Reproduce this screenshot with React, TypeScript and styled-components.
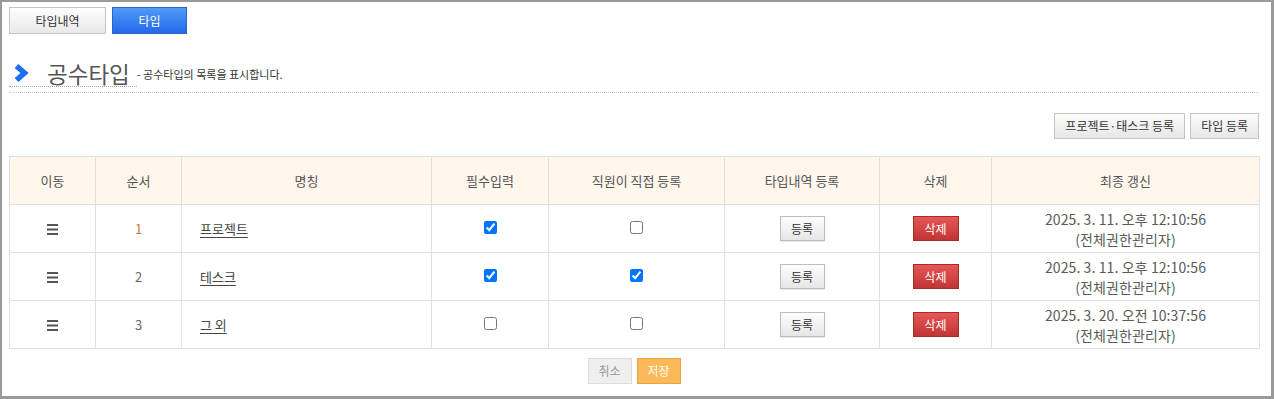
import React from "react"
import styled, {createGlobalStyle} from "styled-components"

const GlobalStyle = createGlobalStyle`
  html, body {
    margin: 0;
    padding: 0;
    background: #fff;
  }
  body {
    font-family: "Noto Sans CJK KR", "Noto Sans", sans-serif;
    color: #555;
  }
`

const Frame = styled.div`
  box-sizing: border-box;
  width: 1274px;
  height: 399px;
  border-style: solid;
  border-color: #9a9a9a;
  border-width: 2px 3px 3px 2px;
  padding: 5px 12px 0 7px;
  overflow: hidden;
`

const Tabs = styled.div`
  display: flex;
  gap: 6px;
`

type TabProps = {$active?: boolean}

const Tab = styled.button<TabProps>`
  box-sizing: border-box;
  height: 27px;
  padding: 0;
  width: ${(p) => (p.$active ? "75px" : "97px")};
  font-family: inherit;
  font-size: 12px;
  line-height: 25px;
  cursor: pointer;
  border: 1px solid ${(p) => (p.$active ? "#2b63c9" : "#c4c4c4")};
  color: ${(p) => (p.$active ? "#fff" : "#333")};
  background: ${(p) =>
    p.$active
      ? "linear-gradient(#4f9bf6, #2468ea)"
      : "linear-gradient(#fdfdfd, #e9e9e9)"};
`

const Header = styled.div`
  display: flex;
  align-items: flex-end;
  margin-top: 26px;
  padding-bottom: 5px;
  border-bottom: 1px dotted #c8c8c8;
`

const Heading = styled.h2`
  display: flex;
  align-items: center;
  margin: 0;
  padding: 0 7px 0 5px;
  height: 26px;
  border-bottom: 1px dotted #aaa;
  font-size: 22.5px;
  font-weight: normal;
  color: #555;
  line-height: 26px;
`

const Chevron = styled.svg`
  width: 15px;
  height: 18px;
  margin-right: 18px;
  flex: none;
`

const Sub = styled.span`
  font-size: 11px;
  color: #333;
  line-height: 16px;
  margin-bottom: 5px;
`

const Actions = styled.div`
  display: flex;
  justify-content: flex-end;
  gap: 5px;
  margin-top: 20px;
`

const GreyButton = styled.button`
  box-sizing: border-box;
  height: 26px;
  padding: 0 10px;
  font-family: inherit;
  font-size: 12px;
  color: #333;
  line-height: 24px;
  border: 1px solid #c4c4c4;
  background: linear-gradient(#fdfdfd, #e6e6e6);
  cursor: pointer;
`

const Table = styled.table`
  width: 1250px;
  margin-top: 17px;
  border-collapse: collapse;
  table-layout: fixed;
  font-size: 13px;
  color: #555;
`

const Th = styled.th`
  height: 47px;
  padding: 0;
  font-weight: normal;
  background: #fff6ec;
  border: 1px solid #e0e0e0;
  text-align: center;
`

type TdProps = {$left?: boolean}

const Td = styled.td<TdProps>`
  height: 47px;
  padding: ${(p) => (p.$left ? "0 0 0 18px" : "0")};
  border: 1px solid #e0e0e0;
  text-align: ${(p) => (p.$left ? "left" : "center")};
  line-height: 18px;
`

const DateCell = styled(Td)`
  font-size: 14px;
  line-height: 20px;
  color: #5a5a5a;
  letter-spacing: 0.1px;
`

type SeqProps = {$hot?: boolean}

const Seq = styled.span<SeqProps>`
  color: ${(p) => (p.$hot ? "#c27a3a" : "#666")};
`

const NameLink = styled.a`
  color: #444;
  text-decoration: underline;
  text-underline-offset: 3px;
  cursor: pointer;
`

const Check = styled.input`
  width: 13px;
  height: 13px;
  margin: 0 0 4px;
  vertical-align: middle;
`

const SmallButton = styled(GreyButton)`
  height: 25px;
  width: 45px;
  padding: 0;
  line-height: 23px;
  border-color: #bdbdbd;
  box-shadow: 0 1px 1px rgba(0, 0, 0, 0.08);
`

const DeleteButton = styled.button`
  box-sizing: border-box;
  height: 25px;
  width: 46px;
  padding: 0;
  font-family: inherit;
  font-size: 12px;
  color: #fff;
  line-height: 23px;
  border: 1px solid #a82a2a;
  background: linear-gradient(#e65757, #c23333);
  cursor: pointer;
`

const Handle = styled.svg`
  width: 11px;
  height: 11px;
  vertical-align: middle;
`

const Footer = styled.div`
  display: flex;
  justify-content: center;
  gap: 5px;
  margin-top: 9px;
`

type FootProps = {$primary?: boolean}

const FootButton = styled.button<FootProps>`
  box-sizing: border-box;
  width: 44px;
  height: 26px;
  padding: 0;
  font-family: inherit;
  font-size: 12px;
  line-height: 24px;
  border: 1px solid ${(p) => (p.$primary ? "#e6a447" : "#dcdcdc")};
  background: ${(p) => (p.$primary ? "#fbb957" : "#efefef")};
  color: ${(p) => (p.$primary ? "#fff" : "#999")};
  cursor: pointer;
`

const rows = [
  {seq: 1, name: "프로젝트", required: true, self: false, date: "2025. 3. 11. 오후 12:10:56"},
  {seq: 2, name: "테스크", required: true, self: true, date: "2025. 3. 11. 오후 12:10:56"},
  {seq: 3, name: "그 외", required: false, self: false, date: "2025. 3. 20. 오전 10:37:56"},
]

const columns = [86, 86, 250, 117, 176, 155, 112, 268]

export default function App() {
  return (
    <>
      <GlobalStyle />
      <Frame>
        <Tabs>
          <Tab>타입내역</Tab>
          <Tab $active>타입</Tab>
        </Tabs>

        <Header>
          <Heading>
            <Chevron viewBox="0 0 15 18">
              <polyline
                points="2.5,2 10.5,9 2.5,16"
                fill="none"
                stroke="#1c6ff2"
                strokeWidth="5.5"
                strokeLinejoin="miter"
              />
            </Chevron>
            공수타입
          </Heading>
          <Sub>- 공수타입의 목록을 표시합니다.</Sub>
        </Header>

        <Actions>
          <GreyButton>프로젝트·태스크 등록</GreyButton>
          <GreyButton>타입 등록</GreyButton>
        </Actions>

        <Table>
          <colgroup>
            {columns.map((w, i) => (
              <col key={i} style={{width: w}} />
            ))}
          </colgroup>
          <thead>
            <tr>
              <Th>이동</Th>
              <Th>순서</Th>
              <Th>명칭</Th>
              <Th>필수입력</Th>
              <Th>직원이 직접 등록</Th>
              <Th>타입내역 등록</Th>
              <Th>삭제</Th>
              <Th>최종 갱신</Th>
            </tr>
          </thead>
          <tbody>
            {rows.map((r) => (
              <tr key={r.seq}>
                <Td>
                  <Handle viewBox="0 0 11 11">
                    <rect x="0" y="0" width="11" height="2" fill="#555" />
                    <rect x="0" y="4.5" width="11" height="2" fill="#555" />
                    <rect x="0" y="9" width="11" height="2" fill="#555" />
                  </Handle>
                </Td>
                <Td>
                  <Seq $hot={r.seq === 1}>{r.seq}</Seq>
                </Td>
                <Td $left>
                  <NameLink>{r.name}</NameLink>
                </Td>
                <Td>
                  <Check type="checkbox" defaultChecked={r.required} />
                </Td>
                <Td>
                  <Check type="checkbox" defaultChecked={r.self} />
                </Td>
                <Td>
                  <SmallButton>등록</SmallButton>
                </Td>
                <Td>
                  <DeleteButton>삭제</DeleteButton>
                </Td>
                <DateCell>
                  {r.date}
                  <br />
                  (전체권한관리자)
                </DateCell>
              </tr>
            ))}
          </tbody>
        </Table>

        <Footer>
          <FootButton>취소</FootButton>
          <FootButton $primary>저장</FootButton>
        </Footer>
      </Frame>
    </>
  )
}
